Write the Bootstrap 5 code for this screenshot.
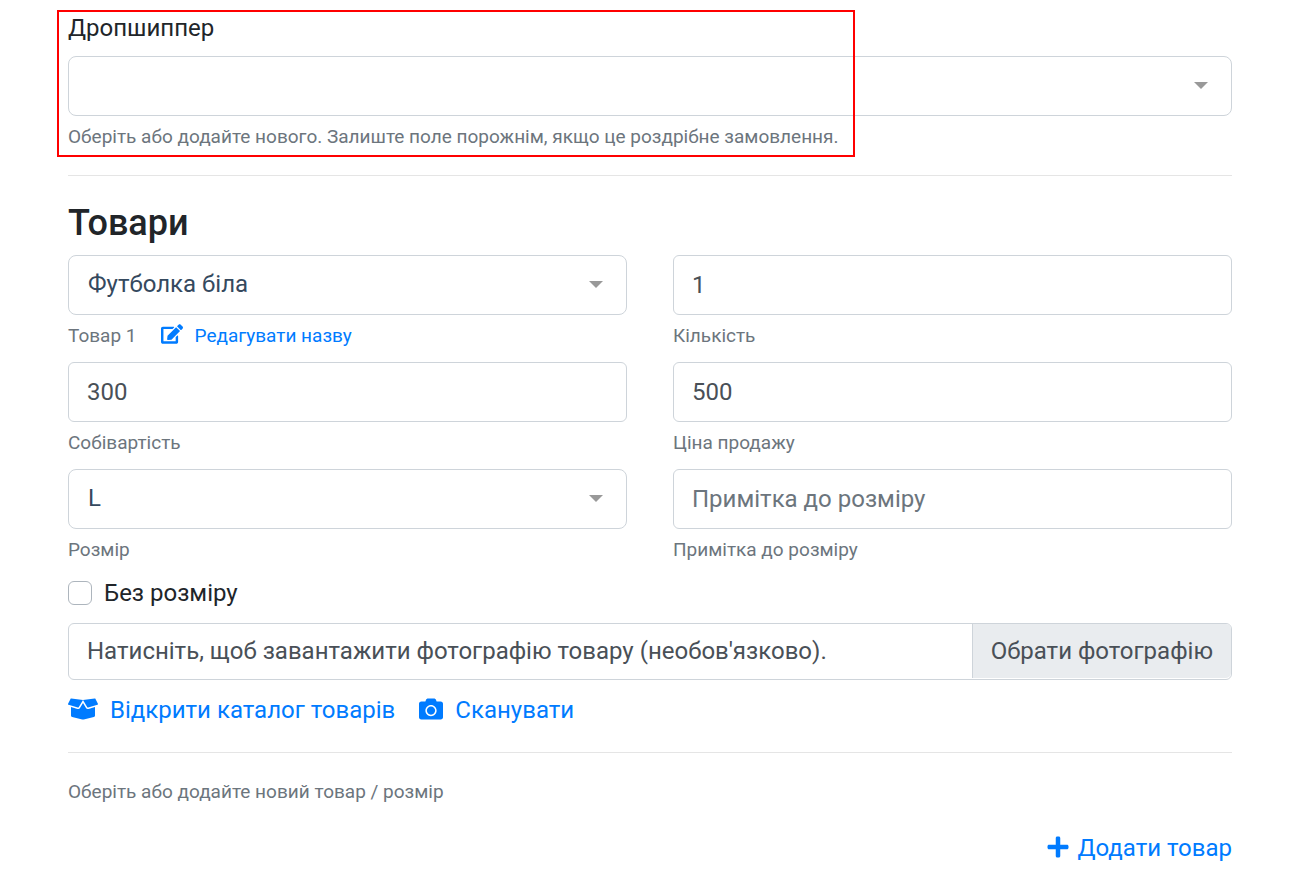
<!DOCTYPE html>
<html lang="uk">
<head>
<meta charset="utf-8">
<meta name="viewport" content="width=device-width, initial-scale=1">
<title>Нове замовлення</title>
<link href="https://cdn.jsdelivr.net/npm/bootstrap@5.3.0/dist/css/bootstrap.min.css" rel="stylesheet">
<style>
  :root { --line: #ced4da; --accent: #007bff; }
  body { font-family: Roboto, "Noto Sans", sans-serif; font-size: 24px; line-height: 36px; color: #212529; }
  .order-form { padding: 10px 66px 12px 68px; }
  a { color: var(--accent); text-decoration: none; }
  h2 { font-size: 36px; line-height: 46px; font-weight: 500; margin: 0 0 9px; }
  hr { margin: 24px 0; color: #000; opacity: .1; }
  .form-label { margin-bottom: 10px; }
  .form-control, .form-select {
    height: 60px; padding: 9px 18px; font-size: 24px; line-height: 36px;
    border: 1px solid var(--line); border-radius: 6px; color: #495057;
  }
  .form-control::placeholder { color: #6c757d; }
  .form-select {
    padding: 8px 50px 10px 19px; color: #35495e; border-radius: 8px;
    background-image: url("data:image/svg+xml,%3csvg xmlns='http://www.w3.org/2000/svg' viewBox='0 0 14 7'%3e%3cpath fill='%23999' d='M0 0h14L7 7z'/%3e%3c/svg%3e");
    background-size: 14px 7px; background-position: right 23px top 25px;
  }
  .form-text, .hint-link { font-size: 19px; line-height: 29px; }
  .form-text { margin-top: 6px; color: #6c757d; }
  .fields { --bs-gutter-x: 46px; row-gap: 12px; }
  .form-check { min-height: 36px; padding: 0; margin: 11px 0 12px; }
  .form-check .form-check-input { width: 24px; height: 24px; margin: 0; border: 1px solid #adb5bd; border-radius: 6px; }
  .file-field { border: 1px solid var(--line); border-radius: 6px; color: #495057; }
  .file-field input { opacity: 0; cursor: pointer; }
  .file-field label > span { padding: 9px 18px; }
  .file-field label { padding-bottom: 1px; }
  .file-field .browse { background: #e9ecef; border-left: 1px solid var(--line); border-radius: 0 5px 5px 0; }
  .actions { margin-top: 12px; }
  svg { fill: currentColor; flex: none; margin-bottom: 3px; }
  .highlight { left: -11px; top: 0; bottom: -6px; width: 798px; border: 2px solid #f00; pointer-events: none; }
</style>
</head>
<body class="bg-white">
<form class="order-form">
  <div class="position-relative">
    <label class="form-label d-block" for="dropshipper">Дропшиппер</label>
    <select class="form-select" id="dropshipper" aria-describedby="dropshipper-help"><option value="" selected></option></select>
    <div class="form-text" id="dropshipper-help">Оберіть або додайте нового. Залиште поле порожнім, якщо це роздрібне замовлення.</div>
    <div class="highlight position-absolute"></div>
  </div>
  <hr>
  <h2>Товари</h2>
  <div class="row fields row-cols-2">
    <div class="col">
      <select class="form-select" id="product"><option selected>Футболка біла</option></select>
      <div class="form-text d-flex align-items-center">
        <label for="product">Товар 1</label>
        <a href="#" class="hint-link d-flex align-items-center ms-4">
          <svg class="me-2" width="22" height="20" viewBox="0 0 576 512" aria-hidden="true"><path d="M402.6 83.2l90.2 90.2c3.8 3.8 3.8 10 0 13.8L274.4 405.6l-92.8 10.3c-12.4 1.4-22.9-9.1-21.5-21.5l10.3-92.8L388.8 83.2c3.8-3.8 10-3.8 13.8 0zm162-22.9l-48.8-48.8c-15.2-15.2-39.9-15.2-55.2 0l-35.4 35.4c-3.8 3.8-3.8 10 0 13.8l90.2 90.2c3.8 3.8 10 3.8 13.8 0l35.4-35.4c15.2-15.3 15.2-40 0-55.2zM384 346.2V448H64V128h229.8c3.2 0 6.2-1.3 8.5-3.5l40-40c7.6-7.6 2.2-20.5-8.5-20.5H48C21.5 64 0 85.5 0 112v352c0 26.5 21.5 48 48 48h352c26.5 0 48-21.5 48-48V306.2c0-10.7-12.9-16-20.5-8.5l-40 40c-2.2 2.3-3.5 5.3-3.5 8.5z"/></svg>
          <span class="ps-1">Редагувати назву</span>
        </a>
      </div>
    </div>
    <div class="col">
      <input class="form-control" id="qty" type="text" inputmode="numeric" value="1">
      <label class="form-text d-block" for="qty">Кількість</label>
    </div>
    <div class="col">
      <input class="form-control" id="cost" type="text" inputmode="numeric" value="300">
      <label class="form-text d-block" for="cost">Собівартість</label>
    </div>
    <div class="col">
      <input class="form-control" id="price" type="text" inputmode="numeric" value="500">
      <label class="form-text d-block" for="price">Ціна продажу</label>
    </div>
    <div class="col">
      <select class="form-select" id="size"><option selected>L</option></select>
      <label class="form-text d-block" for="size">Розмір</label>
    </div>
    <div class="col">
      <input class="form-control" id="size-note" type="text" placeholder="Примітка до розміру">
      <label class="form-text d-block" for="size-note">Примітка до розміру</label>
    </div>
  </div>
  <div class="form-check d-flex align-items-center">
    <input class="form-check-input" type="checkbox" id="no-size">
    <label class="form-check-label ms-2 ps-1" for="no-size">Без розміру</label>
  </div>
  <div class="file-field position-relative">
    <label class="d-flex" for="photo">
      <span class="flex-grow-1">Натисніть, щоб завантажити фотографію товару (необов'язково).</span>
      <span class="browse">Обрати фотографію</span>
    </label>
    <input class="position-absolute top-0 start-0 w-100 h-100" type="file" id="photo">
  </div>
  <div class="actions d-flex gap-4">
    <a href="#" class="d-flex align-items-center">
      <svg class="me-2" width="30" height="24" viewBox="0 0 640 512" aria-hidden="true"><path d="M425.7 256c-16.9 0-32.8-9-41.4-23.4L320 126l-64.2 106.6c-8.7 14.5-24.6 23.5-41.5 23.5-4.5 0-9-.6-13.3-1.9L64 215v178c0 14.7 10 27.5 24.2 31l216.2 54.1c10.2 2.5 20.9 2.5 31 0L551.8 424c14.2-3.6 24.2-16.4 24.2-31V215l-137 39.1c-4.3 1.3-8.8 1.9-13.3 1.9zm212.6-112.2L586.8 41c-3.1-6.2-9.8-9.8-16.7-8.9L320 64l91.7 152.1c3.8 6.3 11.4 9.3 18.5 7.3l197.9-56.5c9.9-2.9 14.7-13.9 10.2-23.1zM53.2 41L1.7 143.8c-4.6 9.2.3 20.2 10.1 23l197.9 56.5c7.1 2 14.7-1 18.5-7.3L320 64 69.8 32.1c-6.9-.8-13.5 2.7-16.6 8.9z"/></svg>
      <span class="ps-1">Відкрити каталог товарів</span>
    </a>
    <a href="#" class="d-flex align-items-center">
      <svg class="me-2" width="24" height="24" viewBox="0 0 512 512" aria-hidden="true"><path d="M512 144v288c0 26.5-21.5 48-48 48H48c-26.5 0-48-21.5-48-48V144c0-26.5 21.5-48 48-48h88l12.3-32.9c7-18.7 24.9-31.1 44.9-31.1h125.5c20 0 37.9 12.4 44.9 31.1L376 96h88c26.5 0 48 21.5 48 48zM376 288c0-66.2-53.8-120-120-120s-120 53.8-120 120 53.8 120 120 120 120-53.8 120-120zm-32 0c0 48.5-39.5 88-88 88s-88-39.5-88-88 39.5-88 88-88 88 39.5 88 88z"/></svg>
      <span class="ps-1">Сканувати</span>
    </a>
  </div>
  <hr>
  <div class="form-text mt-0">Оберіть або додайте новий товар / розмір</div>
  <div class="d-flex justify-content-end mt-4">
    <a href="#" class="d-flex align-items-center">
      <svg class="me-2" width="22" height="24" viewBox="0 0 448 512" aria-hidden="true"><path d="M416 208H272V64c0-17.67-14.33-32-32-32h-32c-17.67 0-32 14.33-32 32v144H32c-17.67 0-32 14.33-32 32v32c0 17.67 14.33 32 32 32h144v144c0 17.67 14.33 32 32 32h32c17.67 0 32-14.33 32-32V304h144c17.67 0 32-14.33 32-32v-32c0-17.67-14.33-32-32-32z"/></svg>
      <span>Додати товар</span>
    </a>
  </div>
</form>
<script src="https://cdn.jsdelivr.net/npm/bootstrap@5.3.0/dist/js/bootstrap.bundle.min.js"></script>
</body>
</html>
